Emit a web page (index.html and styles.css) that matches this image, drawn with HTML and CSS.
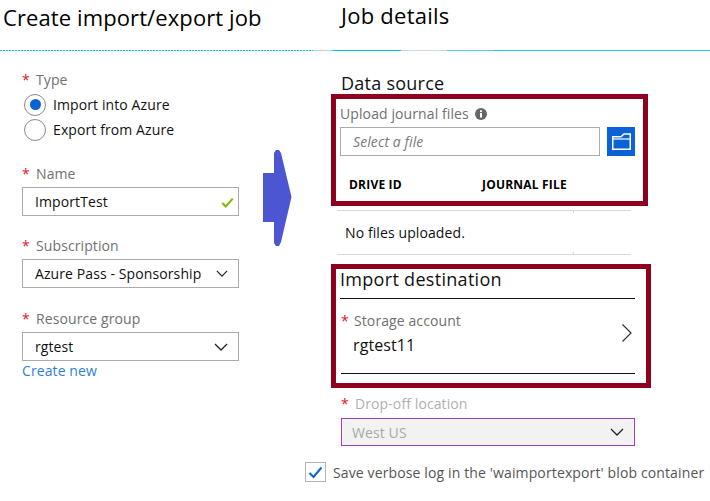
FILE: index.html
```html
<!DOCTYPE html>
<html lang="en">
<head>
<meta charset="utf-8">
<title>Create import/export job</title>
<link rel="stylesheet" href="styles.css">
</head>
<body>
<div class="page">
  <header class="heads">
    <h1 class="title title-left">Create import/export job</h1>
    <h1 class="title title-right">Job details</h1>
  </header>
  <div class="rule"><span class="rule-dots"></span><span class="rule-a"></span><span class="rule-b"></span><span class="rule-c"></span><span class="rule-d"></span><span class="rule-e"></span></div>
  <main class="panes">
    <section class="left">
      <div class="field type-field">
        <div class="label"><span class="req">*</span>Type</div>
        <div class="radio-row"><span class="radio on"></span>Import into Azure</div>
        <div class="radio-row"><span class="radio"></span>Export from Azure</div>
      </div>
      <div class="field">
        <div class="label"><span class="req">*</span>Name</div>
        <div class="box">ImportTest
          <svg class="check" width="13" height="11" viewBox="0 0 15 12"><path d="M1.5 6.5 5.5 10.500 13.500 1.500" fill="none" stroke="#7fba00" stroke-width="2.4"/></svg>
        </div>
      </div>
      <div class="field field-sub">
        <div class="label"><span class="req">*</span>Subscription</div>
        <div class="box">Azure Pass - Sponsorship
          <svg class="chev" width="12" height="7" viewBox="0 0 14 8"><path d="M1 1 7 7 13 1" fill="none" stroke="#222" stroke-width="1.4"/></svg>
        </div>
      </div>
      <div class="field">
        <div class="label"><span class="req">*</span>Resource group</div>
        <div class="box">rgtest
          <svg class="chev" width="14" height="8" viewBox="0 0 14 8"><path d="M1 1 7 7 13 1" fill="none" stroke="#222" stroke-width="1.3"/></svg>
        </div>
        <a class="link">Create new</a>
      </div>
    </section>
    <section class="right">
      <h2 class="section-title">Data source</h2>
      <div class="mark mark-source">
        <div class="upload-label">Upload journal files
          <svg width="12" height="12" viewBox="0 0 12 12"><circle cx="6" cy="6" r="6" fill="#666"/><rect x="5" y="5" width="2" height="4.6" fill="#fff"/><rect x="5" y="2.3" width="2" height="1.8" fill="#fff"/></svg>
        </div>
        <div class="upload-row">
          <div class="box file-box">Select a file</div>
          <div class="folder-btn">
            <svg width="19" height="17" viewBox="0 0 19 17"><path d="M.75 16.250V3.750H9L12 1H18.250V16.250Z" fill="#0b62d6" stroke="#fff" stroke-width="1.5"/><path d="M1 6H18" stroke="#fff" stroke-width="1.2"/></svg>
          </div>
        </div>
        <div class="cols"><span class="col-a">DRIVE ID</span><span>JOURNAL FILE</span></div>
      </div>
      <div class="empty">No files uploaded.</div>
      <div class="mark mark-dest">
        <h2 class="dest-title">Import destination</h2>
        <div class="storage">
          <div>
            <div class="label"><span class="req">*</span>Storage account</div>
            <div class="storage-value">rgtest11</div>
          </div>
          <svg class="storage-chev" width="12" height="20" viewBox="0 0 12 20"><path d="M1.5 1.500 10 10 1.500 18.500" fill="none" stroke="#333" stroke-width="1.2"/></svg>
        </div>
      </div>
      <div class="dropoff">
        <div class="label label-off"><span class="req">*</span>Drop-off location</div>
        <div class="box box-off">West US
          <svg class="chev" width="14" height="8" viewBox="0 0 14 8"><path d="M1 1 7 7 13 1" fill="none" stroke="#222" stroke-width="1.3"/></svg>
        </div>
      </div>
      <div class="verbose">
        <span class="checkbox"><svg width="15" height="13" viewBox="0 0 15 13"><path d="M1.500 7 5.500 11 13.500 1.500" fill="none" stroke="#0b62d6" stroke-width="2"/></svg></span>
        Save verbose log in the 'waimportexport' blob container
      </div>
    </section>
  </main>
  <svg class="arrow" width="29" height="97" viewBox="0 0 29 97"><path d="M11 3 13 0H16L18 3 28.500 47 18 92 16 96H13L11 93V72H0V23H11Z" fill="#4c56d2"/></svg>
</div>
</body>
</html>
```
FILE: styles.css
```css
* { box-sizing: border-box; }
html, body { margin: 0; background: #fff; }
.page {
  position: relative;
  width: 710px;
  height: 501px;
  overflow: hidden;
  font-family: "Open Sans", "Noto Sans", sans-serif;
  font-size: 14px;
  color: #111;
  letter-spacing: 0.1px;
}
.heads { display: flex; height: 50px; }
.title { margin: 0; font-size: 22px; font-weight: 400; letter-spacing: 0.1px; color: #000; }
.title-left { width: 340px; padding: 2px 0 0 3px; }
.title-right { padding: 0 0 0 1px; letter-spacing: 0.25px; }
.rule { height: 1px; display: flex; }
.rule span { display: block; height: 1px; }
.rule-dots { width: 313px; background: repeating-linear-gradient(90deg, #1fc0ee 0 2px, #bdeefa 2px 3px); }
.rule-a { width: 19px; background: #b5dbe4; }
.rule-b { width: 69px; background: #0cc4f2; }
.rule-c { width: 46px; background: #cfd8dc; }
.rule-d { width: 47px; background: #55cdee; }
.rule-e { flex: 1; background: #1cc6f4; }
.panes { display: flex; }
.left { width: 331px; padding: 19px 0 0 22px; }
.field { width: 217px; margin-bottom: 20px; }
.field-sub { margin-bottom: 21px; }
.type-field { margin-bottom: 22px; }
.label { color: #707070; line-height: 20px; height: 20px; margin-bottom: 3px; }
.type-field .label { margin-bottom: 2px; }
.req { color: #e81123; display: inline-block; width: 14px; }
.radio-row { display: flex; align-items: center; height: 25px; gap: 7px; padding-left: 2px; }
.radio { width: 22px; height: 22px; border: 1.5px solid #8a8a8a; border-radius: 50%; display: flex; align-items: center; justify-content: center; }
.radio.on::after { content: ""; width: 11px; height: 11px; border-radius: 50%; background: #0b62d6; }
.box {
  height: 29px;
  border: 1px solid #ababab;
  display: flex;
  align-items: center;
  justify-content: space-between;
  padding: 0 9px 0 12px;
}
.check { flex: none; margin: 1px -5px 0 0; }
.chev { flex: none; margin-right: 1px; }
.link { display: block; color: #2f7fdc; line-height: 20px; margin-top: 0; }
.right { flex: 1; padding: 21px 0 0 0; position: relative; }
.section-title { margin: 0 0 0 10px; font-size: 18px; font-weight: 400; line-height: 22px; letter-spacing: 0.25px; }
.mark { border: 5px solid #8f001f; }
.mark-source { width: 317px; height: 112px; padding: 5px 0 0 4px; }
.upload-label { color: #707070; height: 20px; line-height: 18px; display: flex; align-items: center; gap: 6px; }
.upload-row { display: flex; gap: 7px; margin-top: 3px; }
.file-box { width: 260px; font-style: italic; color: #7a7a7a; }
.folder-btn { width: 28px; height: 29px; background: #0b62d6; display: flex; align-items: center; justify-content: center; }
.cols { display: flex; font-weight: 700; font-size: 12px; padding: 20px 0 0 9px; color: #000; letter-spacing: 0.2px; }
.col-a { width: 133px; }
.empty {
  position: relative;
  width: 294px; margin: 4px 0 0 6px; height: 45px;
  border-top: 1px solid #d8d8d8; border-bottom: 1px solid #d8d8d8;
  padding: 0 0 0 8px; line-height: 43px; color: #111;
}
.empty::before, .empty::after { content: ""; position: absolute; left: 236px; width: 1px; height: 2px; background: #d8d8d8; }
.empty::before { top: 0; }
.empty::after { bottom: 0; }
.mark-dest { width: 320px; height: 124px; margin-top: 9px; padding: 0 11px 0 5px; }
.dest-title { margin: 0 0 0 -1px; font-size: 18px; font-weight: 400; line-height: 20px; height: 30px; border-bottom: 1px solid #111; letter-spacing: 0.3px; }
.storage { height: 75px; border-bottom: 1px solid #111; display: flex; justify-content: space-between; align-items: flex-start; padding: 0 2px 0 0; }
.storage .label { margin-top: 12px; margin-bottom: 3px; }
.storage .req { width: 13px; }
.storage-chev { margin-top: 24px; }
.storage-value { padding-left: 12px; font-size: 16px; line-height: 22px; }
.dropoff { width: 294px; margin: 6px 0 0 10px; }
.label-off { color: #b0b0b0; margin-bottom: 4px; }
.box-off { background: #f2f2f2; border-color: #9a3fb5; color: #a8a8a8; padding-left: 10px; height: 28px; }
.verbose { display: flex; align-items: center; gap: 7px; margin: 16px 0 0 -26px; color: #555; white-space: nowrap; letter-spacing: 0.13px; }
.checkbox { width: 21px; height: 20px; border: 1px solid #b5b5b5; display: flex; align-items: center; justify-content: center; flex: none; }
.arrow { position: absolute; left: 263px; top: 150px; }
```
